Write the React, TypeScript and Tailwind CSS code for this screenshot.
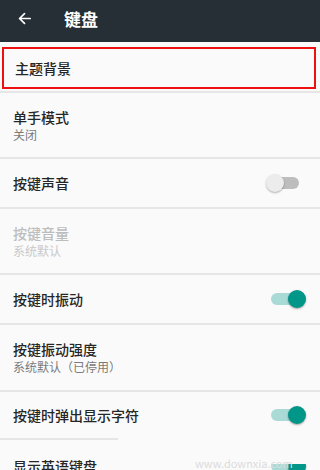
import React from "react";

const font = { fontFamily: '"Noto Sans CJK SC", "Noto Sans", sans-serif' };

function Toggle({ on }: { on: boolean }) {
  return (
    <div className="relative w-[40px] h-[20px] shrink-0">
      <div
        className={
          on
            ? "absolute left-[5px] top-[4px] w-[30px] h-[12px] rounded-full bg-[#a9dad5]"
            : "absolute left-[3px] top-[4px] w-[30px] h-[12px] rounded-full bg-[#bdbdbd]"
        }
      />
      <div
        className={
          on
            ? "absolute right-0 top-[1px] w-[18px] h-[18px] rounded-full bg-[#009688] shadow-[0_1px_2px_rgba(0,0,0,0.35)]"
            : "absolute left-0 top-[1px] w-[18px] h-[18px] rounded-full bg-[#ececec] shadow-[0_1px_2px_rgba(0,0,0,0.3)]"
        }
      />
    </div>
  );
}

function Row({
  title,
  sub,
  disabled,
  toggle,
  h,
  sepShort,
}: {
  title: string;
  sub?: string;
  disabled?: boolean;
  toggle?: boolean;
  h: string;
  sepShort?: boolean;
}) {
  return (
    <div className="flex flex-col">
      <div className={`flex items-center justify-between pl-[13px] pr-[14px] ${h}`}>
        <div className="flex flex-col">
          <span
            className={`text-[14px] leading-[17px] font-medium ${
              disabled ? "text-[#bdbdbd]" : "text-[#262626]"
            }`}
          >
            {title}
          </span>
          {sub && (
            <span
              className={`text-[12px] leading-[15px] mt-[1px] ${
                disabled ? "text-[#c9c9c9]" : "text-[#7a7a7a]"
              }`}
            >
              {sub}
            </span>
          )}
        </div>
        {toggle !== undefined && <Toggle on={toggle} />}
      </div>
      <div className={`h-[2px] bg-[#e6e6e6] ${sepShort ? "w-[118px]" : "w-full"}`} />
    </div>
  );
}

export default function App() {
  return (
    <div className="relative w-[320px] h-[470px] overflow-hidden bg-[#fafafa]" style={font}>
      <div className="h-[42px] bg-[#252f35] flex items-start pt-[9px] pl-[16px]">
        <svg width="17" height="17" viewBox="0 0 24 24" className="mt-[1px]">
          <path
            d="M20 12H5M12 5l-7 7 7 7"
            stroke="#ffffff"
            strokeWidth="2.4"
            fill="none"
            strokeLinecap="round"
            strokeLinejoin="round"
          />
        </svg>
        <span className="ml-[31px] text-[17px] leading-[19px] font-bold text-white">键盘</span>
      </div>
      <div className="pt-[5px] px-[2px] pr-[4px]">
        <div className="h-[42px] border-2 border-[#ee1111] flex items-center pl-[11px]">
          <span className="text-[14px] font-medium text-[#262626]">主题背景</span>
        </div>
      </div>
      <div className="h-[2px] mt-[2px] bg-[#e6e6e6]" />
      <Row title="单手模式" sub="关闭" h="h-[64px]" />
      <Row title="按键声音" toggle={false} h="h-[48px]" />
      <Row title="按键音量" sub="系统默认" disabled h="h-[64px]" />
      <Row title="按键时振动" toggle={true} h="h-[48px]" />
      <Row title="按键振动强度" sub="系统默认（已停用）" h="h-[65px]" />
      <Row title="按键时弹出显示字符" toggle={true} h="h-[46px]" sepShort />
      <Row title="显示英语键盘" toggle={true} h="h-[52px]" />
      <div className="absolute left-[150px] top-[456px] w-[170px] h-[8px] bg-[#fafafa]" />
      <div className="absolute left-[195px] top-[457px] text-[11px] leading-[12px] text-[#dcdcdc]">
        www.downxia.com
      </div>
    </div>
  );
}
